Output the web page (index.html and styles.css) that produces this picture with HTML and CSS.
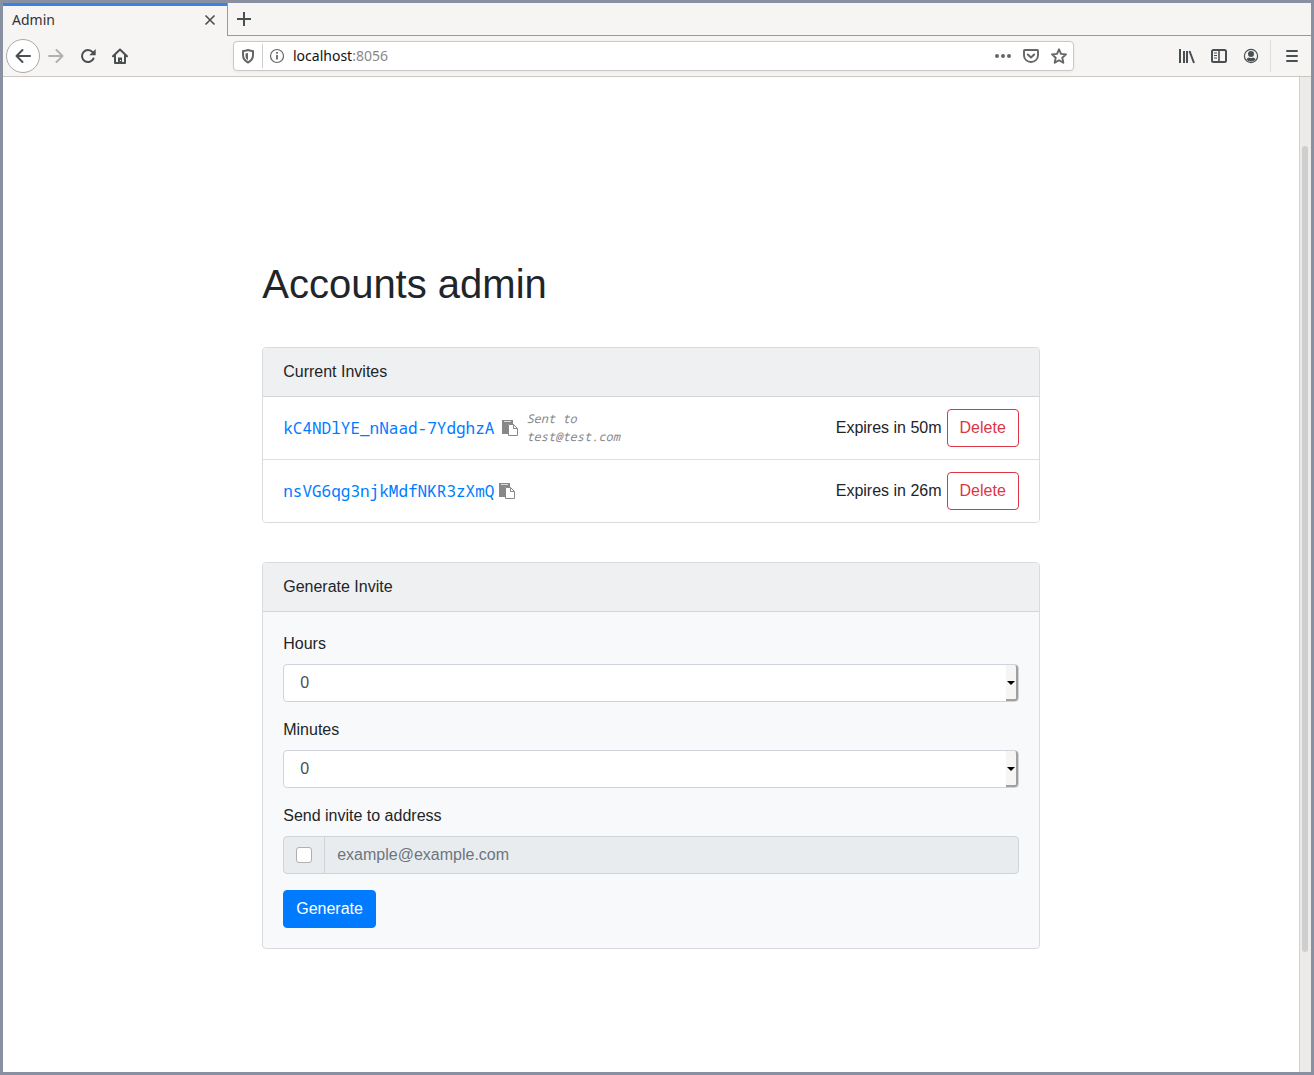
FILE: index.html
```html
<!DOCTYPE html>
<html lang="en">
<head>
<meta charset="utf-8">
<title>Admin</title>
<link rel="stylesheet" href="styles.css">
</head>
<body>
<div class="window">
  <header class="chrome">
    <div class="tabs">
      <div class="tab">
        <span class="tab-title">Admin</span>
        <button class="icon-button" type="button" aria-label="Close tab">
          <svg class="icon" viewBox="0 0 16 16"><path d="M3.500 3.500l9 9M12.500 3.500l-9 9" stroke-width="1.600"/></svg>
        </button>
      </div>
      <div class="tab-strip">
        <button class="icon-button" type="button" aria-label="New tab">
          <svg class="icon" viewBox="0 0 16 16"><path d="M8 1v14M1 8h14" stroke-width="2"/></svg>
        </button>
      </div>
    </div>
    <div class="toolbar">
      <div class="nav">
        <button class="icon-button back" type="button" aria-label="Back">
          <svg class="icon" viewBox="0 0 16 16"><path d="M15 8H1.500M7.500 2L1.500 8l6 6" stroke-width="2" stroke-linecap="round" stroke-linejoin="round"/></svg>
        </button>
        <button class="icon-button" type="button" aria-label="Forward" disabled>
          <svg class="icon" viewBox="0 0 16 16"><path d="M1 8h13.500M8.500 2l6 6-6 6" stroke-width="2" stroke-linecap="round" stroke-linejoin="round"/></svg>
        </button>
        <button class="icon-button" type="button" aria-label="Reload">
          <svg class="icon" viewBox="0 0 16 16"><path d="M12.600 4.200A6 6 0 1 0 13.500 10.500" stroke-width="2" stroke-linecap="round"/><path class="solid" d="M15.700 1v6.200H9.300z"/></svg>
        </button>
        <button class="icon-button" type="button" aria-label="Home">
          <svg class="icon" viewBox="0 0 16 16"><path d="M1 8.300L8 1.500l7 6.800M3 7.500V15h10V7.500" stroke-width="2" stroke-linecap="round" stroke-linejoin="round"/><path class="solid" d="M6 15V9.500h4V15z"/><path d="M8.500 12v1" stroke="#fff" stroke-width="1"/></svg>
        </button>
      </div>
      <div class="address">
        <button class="icon-button shield" type="button" aria-label="Tracking protection">
          <svg class="icon" viewBox="0 0 16 16"><path d="M8 2C6 2.800 4.500 3 3 3v4c0 4 2 6 5 7.500C11 13 13 11 13 7V3c-1.500 0-3-.2-5-1z" stroke-width="2" stroke-linejoin="round"/><path class="solid" d="M8 5c-1 .3-1.600.5-2.500.5V8c0 2 .8 3.200 2.500 4.200z"/></svg>
        </button>
        <button class="icon-button" type="button" aria-label="Site information">
          <svg class="icon" viewBox="0 0 16 16"><circle cx="8" cy="8" r="6.500" stroke-width="1.200"/><path d="M8 7v4.500M8 4v1.700" stroke-width="1.800"/></svg>
        </button>
        <span class="url"><span>localhost</span>:8056</span>
        <div class="page-actions">
          <button class="icon-button" type="button" aria-label="Page actions">
            <svg class="icon" viewBox="0 0 16 16"><g class="solid"><circle cx="2" cy="8" r="2"/><circle cx="8" cy="8" r="2"/><circle cx="14" cy="8" r="2"/></g></svg>
          </button>
          <button class="icon-button" type="button" aria-label="Save to Pocket">
            <svg class="icon" viewBox="0 0 16 16"><path d="M1.800 2h12.400q.8 0 .8.800V7.500a7 6.500 0 0 1-14 0V2.800Q1 2 1.800 2z" stroke-width="1.900"/><path d="M4.800 6.500L8 9.500l3.200-3" stroke-width="2" stroke-linecap="round" stroke-linejoin="round"/></svg>
          </button>
          <button class="icon-button" type="button" aria-label="Bookmark">
            <svg class="icon" viewBox="0 0 16 16"><path d="M8 1.300l2 4.600 5 .5-3.700 3.400 1 5L8 12.200l-4.300 2.600 1-5L1 6.400l5-.5z" stroke-width="1.900" stroke-linejoin="round"/></svg>
          </button>
        </div>
      </div>
      <div class="tools">
        <button class="icon-button" type="button" aria-label="Library">
          <svg class="icon" viewBox="0 0 16 16"><path d="M1 1v14M5 3v12M8 3v12M10.500 3l4.500 12" stroke-width="2"/></svg>
        </button>
        <button class="icon-button" type="button" aria-label="Sidebars">
          <svg class="icon" viewBox="0 0 16 16"><rect x="1" y="2" width="14" height="12" rx="1.500" stroke-width="2"/><path d="M8 2v12" stroke-width="1.600"/><path d="M3 5h3M3 7.500h3M3 10h3" stroke-width="1"/></svg>
        </button>
        <button class="icon-button" type="button" aria-label="Account">
          <svg class="icon" viewBox="0 0 16 16"><circle cx="8" cy="8" r="6.600" stroke-width="1.200"/><g class="solid"><circle cx="8" cy="6" r="3"/><path d="M3.300 11.200Q5 9.700 6 9.500q2 1 4 0 1.200.2 2.700 1.700Q11 13.500 8 13.500t-4.700-2.300z"/></g></svg>
        </button>
        <button class="icon-button menu" type="button" aria-label="Menu">
          <svg class="icon" viewBox="0 0 16 16"><path d="M3 3h10M3 8h10M3 13h10" stroke-width="2" stroke-linecap="round"/></svg>
        </button>
      </div>
    </div>
  </header>
  <div class="viewport">
    <main class="page">
      <div class="container">
        <h1>Accounts admin</h1>
        <section class="card">
          <h2 class="card-header">Current Invites</h2>
          <ul class="invites">
            <li class="invite">
              <a class="code" href="#">kC4NDlYE_nNaad-7YdghzA</a>
              <button class="copy spaced" type="button" aria-label="Copy invite link">
                <svg viewBox="0 0 16 16"><path d="M0 0h11v4H6v10H0z"/><path fill="#ddd" d="M2 1h7v1H2z"/><path fill="#fff" stroke="#888" d="M6.500 4.500h5l4 4v7h-9z"/><path fill="none" stroke="#888" d="M11.500 4.500v4h4"/></svg>
              </button>
              <span class="sent">Sent to test@test.com</span>
              <span class="expires">Expires in 50m</span>
              <button class="button danger" type="button">Delete</button>
            </li>
            <li class="invite">
              <a class="code" href="#">nsVG6qg3njkMdfNKR3zXmQ</a>
              <button class="copy" type="button" aria-label="Copy invite link">
                <svg viewBox="0 0 16 16"><path d="M0 0h11v4H6v10H0z"/><path fill="#ddd" d="M2 1h7v1H2z"/><path fill="#fff" stroke="#888" d="M6.500 4.500h5l4 4v7h-9z"/><path fill="none" stroke="#888" d="M11.500 4.500v4h4"/></svg>
              </button>
              <span class="expires">Expires in 26m</span>
              <button class="button danger" type="button">Delete</button>
            </li>
          </ul>
        </section>
        <section class="card">
          <h2 class="card-header">Generate Invite</h2>
          <form class="card-body">
            <div class="field">
              <label for="hours">Hours</label>
              <div class="select"><select id="hours"><option>0</option></select></div>
            </div>
            <div class="field">
              <label for="minutes">Minutes</label>
              <div class="select"><select id="minutes"><option>0</option></select></div>
            </div>
            <div class="field">
              <label for="address">Send invite to address</label>
              <div class="input-group">
                <span class="addon"><input type="checkbox" aria-label="Send invite by email"></span>
                <input class="email" id="address" type="email" placeholder="example@example.com" disabled>
              </div>
            </div>
            <button class="button primary" type="button">Generate</button>
          </form>
        </section>
      </div>
    </main>
    <div class="scrollbar"><div class="thumb"></div></div>
  </div>
</div>
</body>
</html>
```
FILE: styles.css
```css
*, ::before, ::after { box-sizing: border-box; }

body {
  margin: 0;
  color: #212529;
  font: 16px/24px "Liberation Sans", Arial, sans-serif;
}

button, input, select { font: inherit; color: inherit; margin: 0; }

.window {
  display: flex;
  flex-direction: column;
  min-height: 100vh;
  border: 3px solid #8990a1;
  background: #fff;
}

/* Browser chrome */
.chrome {
  background: #f6f5f4;
  border-bottom: 1px solid #cdc7c2;
  color: #4a4f51;
  font: 14px/20px "Noto Sans", sans-serif;
}

.tabs { display: flex; height: 33px; }

.tab {
  display: flex;
  align-items: center;
  justify-content: space-between;
  width: 224px;
  padding: 0 9px 2px;
  border-top: 3px solid #3584e4;
  color: #2e3436;
}

.tab-strip {
  flex: 1;
  display: flex;
  align-items: center;
  padding: 0 8px;
  border-left: 1px solid #999;
  border-bottom: 1px solid #999;
}

.icon-button {
  display: flex;
  padding: 0;
  border: 0;
  background: none;
}
.icon-button:disabled { opacity: 0.4; }

.icon { width: 16px; height: 16px; fill: none; stroke: #4a4f51; }
.icon .solid { fill: #4a4f51; stroke: none; }
.address .icon { stroke: #666; }
.address .icon .solid { fill: #666; }

.toolbar {
  display: flex;
  align-items: center;
  height: 40px;
  padding: 0 11px 0 3px;
}

.nav { display: flex; align-items: center; gap: 16px; flex: 0 0 227px; }

.back {
  margin-right: -8px;
  padding: 8px;
  border: 1px solid #aaa;
  border-radius: 50%;
  background: #fff;
}

.address {
  flex: 1;
  display: flex;
  align-items: center;
  height: 30px;
  padding: 0 6px;
  border: 1px solid #cdc7c2;
  border-radius: 4px;
  background: #fff;
  box-shadow: 0 1px 3px rgba(0, 0, 0, 0.06);
}

.shield {
  margin-right: 6px;
  padding: 4px 6px 4px 0;
  border-right: 1px solid #ccc;
}

.url { flex: 1; padding-left: 8px; color: #888; }
.url span { color: #111; }

.page-actions { display: flex; gap: 12px; }

.tools {
  display: flex;
  align-items: center;
  gap: 16px;
  margin-left: 105px;
}

.menu {
  margin-left: -5px;
  padding: 8px 0 8px 13px;
  border-left: 1px solid #ddd;
}

/* Page area */
.viewport { flex: 1; display: flex; }

.page { flex: 1; padding: 183px 0 80px; }

.container { width: 60%; margin: 0 auto; }

.scrollbar {
  width: 12px;
  padding: 69px 2px 0;
  border-left: 1px solid #d5d0cc;
  background: #edebe9;
}
.thumb { width: 6px; height: 87%; border-radius: 3px; background: #cecece; }

h1 {
  margin: 0 0 39px;
  font-size: 40px;
  line-height: 48px;
  font-weight: 400;
}

.card {
  margin-bottom: 39px;
  border: 1px solid #d9dbde;
  border-radius: 4px;
  background: #f8f9fa;
  overflow: hidden;
}

.card-header {
  margin: 0;
  padding: 12px 20px;
  border-bottom: 1px solid #d3d5d8;
  background: #eff0f2;
  font-size: 16px;
  font-weight: 400;
}

.invites { margin: 0; padding: 0; list-style: none; background: #fff; }

.invite {
  display: flex;
  align-items: center;
  padding: 12px 20px;
}
.invite + .invite { border-top: 1px solid #dfdfdf; }

.code {
  color: #007bff;
  font-family: "Noto Sans Mono", "DejaVu Sans Mono", monospace;
  text-decoration: none;
}

.copy {
  margin-left: 5px;
  padding: 0;
  border: 0;
  background: none;
}
.copy svg { display: block; width: 16px; height: 16px; fill: #888; }
.copy.spaced { margin: 0 8px; }

.sent {
  width: 96px;
  color: #888;
  font: italic 12px/18px "Noto Sans Mono", "DejaVu Sans Mono", monospace;
}

.expires { margin-left: auto; }

.button {
  padding: 6px 12px;
  border: 1px solid;
  border-radius: 4px;
  line-height: 24px;
}
.danger { margin-left: 5px; border-color: #dc3545; background: #fff; color: #dc3545; }
.primary { border-color: #007bff; background: #007bff; color: #fff; }

.card-body { padding: 20px; }

.field { margin-bottom: 16px; }
.field label { display: block; margin-bottom: 8px; }

.select { position: relative; }
.select select {
  display: block;
  width: 100%;
  height: 38px;
  padding: 6px 16px;
  border: 1px solid #ced4da;
  border-radius: 4px;
  background: #fff;
  color: #495057;
  appearance: none;
}
.select::before {
  content: "";
  position: absolute;
  top: 1px;
  right: 1px;
  bottom: 1px;
  width: 12px;
  border: solid #a0a0a0;
  border-width: 0 2px 2px 0;
  border-radius: 0 3px 3px 0;
  background: #f6f5f4;
  pointer-events: none;
}
.select::after {
  content: "";
  position: absolute;
  top: 17px;
  right: 4px;
  border: solid transparent;
  border-width: 4px 4px 0;
  border-top-color: #000;
  pointer-events: none;
}

.input-group {
  display: flex;
  height: 38px;
  border: 1px solid #ced4da;
  border-radius: 4px;
  background: #e9ecef;
}
.addon {
  display: flex;
  align-items: center;
  padding: 0 12px;
  border-right: 1px solid #ced4da;
}
.addon input {
  width: 16px;
  height: 16px;
  border: 1px solid #b6aea8;
  border-radius: 3px;
  background: #fff;
  appearance: none;
}
.email {
  flex: 1;
  min-width: 0;
  padding: 0 12px;
  border: 0;
  background: none;
}
.email::placeholder { color: #6c757d; }
```
